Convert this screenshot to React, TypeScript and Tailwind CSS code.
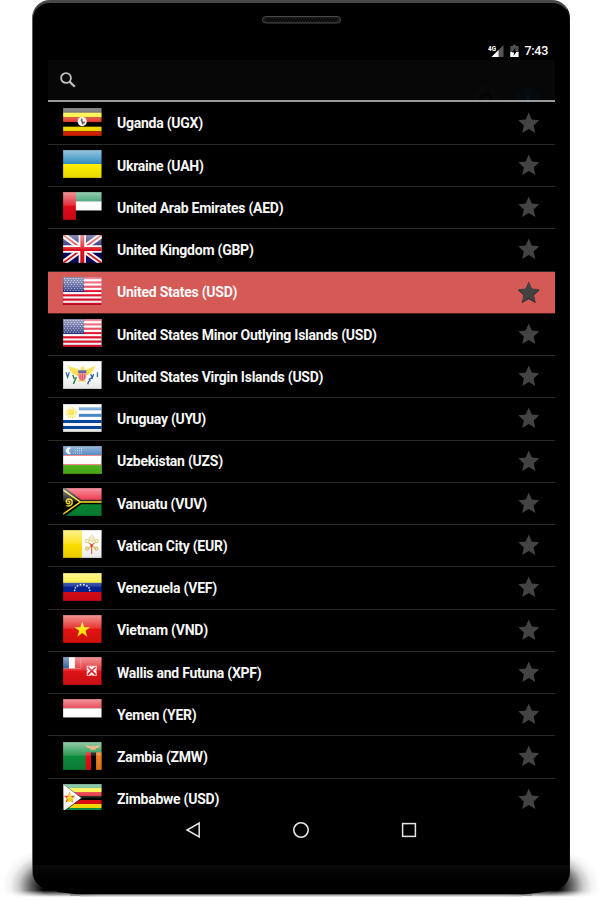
import type { ReactNode } from 'react'
import { clsx } from 'clsx'

interface Country {
  name: string
  flag: ReactNode
  selected?: boolean
}

const STAR = 'M12 1.6l3.1 7.1 7.6.8-5.7 5.2 1.7 7.7-6.7-4-6.7 4 1.7-7.7L1.3 9.5l7.6-.8z'

function Stripes({ colors }: { colors: string[] }) {
  const h = 28 / colors.length
  return (
    <>
      {colors.map((c, i) => (
        <rect key={i} x="0" y={i * h} width="39" height={h + 0.05} fill={c} />
      ))}
    </>
  )
}

function UsFlag() {
  const dots: ReactNode[] = []
  for (let r = 0; r < 7; r++) {
    for (let c = 0; c < 7; c++) {
      dots.push(<circle key={`${r}-${c}`} cx={1.6 + c * 2.9 + (r % 2) * 1.3} cy={1.5 + r * 1.95} r="0.55" />)
    }
  }
  return (
    <>
      <rect width="39" height="28" fill="#fff" />
      {[0, 2, 4, 6, 8, 10, 12].map((i) => (
        <rect key={i} y={i * 2.154} width="39" height="2.154" fill="#e8102e" />
      ))}
      <rect width="21.3" height="15" fill="#26307c" />
      <g fill="#d5d8ee">{dots}</g>
    </>
  )
}

function UkFlag() {
  return (
    <>
      <rect width="39" height="28" fill="#05055f" />
      <path d="M0 0l39 28M39 0L0 28" stroke="#fff" strokeWidth="5.6" />
      <path d="M0 0l19.5 14M39 28L19.5 14M39 0L19.5 14M0 28l19.5-14" stroke="#e0101c" strokeWidth="1.7" />
      <path d="M19.5 0v28M0 14h39" stroke="#fff" strokeWidth="7.4" />
      <path d="M19.5 0v28M0 14h39" stroke="#e0101c" strokeWidth="4" />
    </>
  )
}

function UgandaFlag() {
  return (
    <>
      <Stripes colors={['#111', '#ffee00', '#e02010', '#000', '#f8e000', '#e02400']} />
      <circle cx="19.4" cy="13.6" r="4.6" fill="#fff" />
      <path d="M18.4 10l1.8 1.3-.5 1.6 1.3 1.4-.3 2.2-1.5-.2-.5-2.4-1-1.4z" fill="#555" />
      <path d="M20.7 13.4l1.6.3-.4 1.7-1.4-.4z" fill="#e02010" />
    </>
  )
}

function UaeFlag() {
  return (
    <>
      <Stripes colors={['#108c50', '#fff', '#000']} />
      <rect width="13" height="28" fill="#e00b18" />
    </>
  )
}

function VirginFlag() {
  return (
    <>
      <rect width="39" height="28" fill="#fff" />
      <path
        d="M18 9.5l-3-1.5-11-3.5 3 4-1 .2 3 2.3-1 .5 4 2 4 1.5 1 3.5-2 2.5 4-1 4.5 1-2.5-2.5 1-3.5 3.5-1.5 4-2-1-.5 3-2.3-1-.2 3-4-9 3.5-2.5 1.5c0-2.5-.7-4.2-2-4.2-1.5 0-2.3 1.5-2 4.2z"
        fill="#f5d817"
      />
      <path d="M15.4 9.2h8.2v6.5c0 2-1.8 3.3-4.1 4.3-2.3-1-4.1-2.3-4.1-4.3z" fill="#f2939a" />
      <path d="M17.3 12v6.3M19.5 12v7.6M21.7 12v6.3" stroke="#e04550" strokeWidth=".8" />
      <path d="M15.4 9.2h8.2v2.9h-8.2z" fill="#39438c" />
      <path d="M3 11l1.7 5L6.3 11M34.8 11v5" stroke="#276aa4" strokeWidth="1.4" fill="none" />
      <path d="M10 14l1.4 4M13.5 16l-3 7" stroke="#319246" strokeWidth="1.6" />
      <path d="M28 13l1.6 3.6-3 1.6 1 2.2M26 20l-1 3.2M31 13l-2 5" stroke="#2c62a6" strokeWidth="1.4" fill="none" />
    </>
  )
}

function UruguayFlag() {
  return (
    <>
      <rect width="39" height="28" fill="#fff" />
      <rect x="16" y="3.3" width="23" height="3" fill="#2478c8" />
      <rect x="16" y="9.8" width="23" height="3" fill="#1766b5" />
      <rect y="16" width="39" height="3" fill="#0647a0" />
      <rect y="22" width="39" height="3" fill="#0647a0" />
      <circle cx="8.3" cy="8.3" r="4.8" fill="none" stroke="#f4dd20" strokeWidth="1.9" strokeDasharray="1.1 .8" />
      <circle cx="8.3" cy="8.3" r="3.3" fill="#f4dd20" />
    </>
  )
}

function UzbekFlag() {
  return (
    <>
      <rect width="39" height="28" fill="#fff" />
      <rect width="39" height="9" fill="#1a60ad" />
      <rect y="9" width="39" height=".8" fill="#e83b40" />
      <rect y="18.4" width="39" height=".8" fill="#e83b40" />
      <rect y="19.1" width="39" height="9" fill="#50b51b" />
      <path d="M7.8 2.1A3.1 3.1 0 1 0 7.8 7.4 2.8 2.8 0 0 1 7.8 2.1z" fill="#fff" stroke="#fff" strokeWidth=".4" />
      <path d="M14 2.4h6.5M12 4.7h8.5M10 7h10.5" stroke="#dce9f8" strokeWidth=".9" strokeDasharray=".9 1.2" />
    </>
  )
}

function VanuatuFlag() {
  return (
    <>
      <rect width="39" height="14" fill="#eb0d28" />
      <rect y="14" width="39" height="14" fill="#078532" />
      <path d="M0 0l19 14L0 28z" fill="#000" />
      <path d="M0 1l17.5 13L0 27M17.5 14H39" stroke="#000" strokeWidth="4.6" fill="none" />
      <path d="M0 1.8L17.5 14 0 26.2M17.5 14H39" stroke="#ffe11a" strokeWidth="1.5" fill="none" />
      <path d="M3.2 17.6c4 1.5 6.8-1.4 6-4.4-.8-3-5.7-3-5.9.4-.1 2.5 3.4 3 3.6.8.1-1.1-1.2-1.4-1.7-.6" stroke="#f3d51c" strokeWidth="1.5" fill="none" />
    </>
  )
}

function VaticanFlag() {
  return (
    <>
      <rect width="19.2" height="28" fill="#ffdf00" />
      <rect x="19.2" width="19.8" height="28" fill="#fff" />
      <g stroke="#dfc760" strokeWidth="1.2" fill="none">
        <path d="M25 12l8 7M33 12l-8 7" />
        <circle cx="24.2" cy="11" r="1.6" />
        <circle cx="33.8" cy="11" r="1.6" />
        <circle cx="24.3" cy="18.7" r="1.5" />
        <circle cx="33.7" cy="18.7" r="1.5" />
      </g>
      <path d="M26.8 11c-1-3.5 1-5.5 2.2-6 1.2.5 3.2 2.5 2.2 6z" fill="#eee4bd" stroke="#d9bc55" strokeWidth=".8" />
      <path d="M27 13l2 3 2-3M29 14v7M27.5 16h3" stroke="#e2434c" strokeWidth="1" fill="none" />
      <path d="M29 21v3" stroke="#d25b5b" strokeWidth="1" />
    </>
  )
}

function VenezuelaFlag() {
  const angles = [180, 154, 129, 103, 77, 51, 26, 0]
  return (
    <>
      <rect width="39" height="10" fill="#ffec12" />
      <rect y="9.8" width="39" height="9.2" fill="#04218f" />
      <rect y="19" width="39" height="9" fill="#d90c18" />
      {angles.map((a) => (
        <circle
          key={a}
          cx={19.4 + 7.6 * Math.cos((a * Math.PI) / 180)}
          cy={17.3 - 5.8 * Math.sin((a * Math.PI) / 180)}
          r=".85"
          fill="#e9eefa"
        />
      ))}
    </>
  )
}

function VietnamFlag() {
  return (
    <>
      <rect width="39" height="28" fill="#e3120f" />
      <path d="M19.5 6.5l2 5.7h6l-4.8 3.6 1.8 5.9-5-3.6-5 3.6 1.8-5.9-4.8-3.6h6z" fill="#ffec00" />
    </>
  )
}

function WallisFlag() {
  return (
    <>
      <rect width="39" height="28" fill="#df1217" />
      <path d="M0 11.5h18V0" stroke="#eb8d8d" strokeWidth=".5" fill="none" />
      <rect width="6" height="11.3" fill="#06358a" />
      <rect x="6" width="6" height="11.3" fill="#fff" />
      <rect x="24" y="8.8" width="10" height="10" fill="#fff" />
      <path d="M25 9.8l8 8M33 9.8l-8 8" stroke="#e4202a" strokeWidth="1.7" />
      <path d="M28 8.8h2l-1 1.2zM28 18.8h2l-1-1.2zM24 12.8v2l1.2-1zM34 12.8v2l-1.2-1z" fill="#df1217" />
    </>
  )
}

function ZambiaFlag() {
  return (
    <>
      <rect width="39" height="28" fill="#0c8a3a" />
      <rect x="23" y="10.4" width="5.3" height="17.6" fill="#ea0d18" />
      <rect x="28.3" y="10.4" width="5.2" height="17.6" fill="#000" />
      <rect x="33.5" y="10.4" width="5.5" height="17.6" fill="#f47c1c" />
      <path d="M22.6 2.8c2.6 1 4.5 1.3 6.5 1.6l1-.9 1 .9c2.4-.3 4-.6 6.5-1.6-1.2 3-3 3.6-5.3 3.9l.7 1.5-2.9-.6-2.8.6.8-1.5c-2.4-.3-4.6-1.3-5.5-3.9z" fill="#f28a46" />
    </>
  )
}

function ZimbabweFlag() {
  return (
    <>
      <Stripes colors={['#159355', '#ffea00', '#e00b18', '#000', '#df0d12', '#ffe400', '#079447']} />
      <path d="M0 0l19 14L0 28z" fill="#fff" stroke="#000" strokeWidth=".7" />
      <path d="M6.5 7.5l1.5 4.2h4.5L9 14.4l1.3 4.3-3.8-2.6-3.8 2.6L4 14.4.6 11.7H5z" fill="#e22b1c" />
      <path d="M5.2 9l2.8.8.4 2.6 2.8 2.8-2.5.5 1.2 2H4l.8-2.2-1.5-1.4 2.1-1.7z" fill="#f4d51d" />
    </>
  )
}

const countries: Country[] = [
  { name: 'Uganda (UGX)', flag: <UgandaFlag /> },
  { name: 'Ukraine (UAH)', flag: <Stripes colors={['#137db8', '#ffee00']} /> },
  { name: 'United Arab Emirates (AED)', flag: <UaeFlag /> },
  { name: 'United Kingdom (GBP)', flag: <UkFlag /> },
  { name: 'United States (USD)', flag: <UsFlag />, selected: true },
  { name: 'United States Minor Outlying Islands (USD)', flag: <UsFlag /> },
  { name: 'United States Virgin Islands (USD)', flag: <VirginFlag /> },
  { name: 'Uruguay (UYU)', flag: <UruguayFlag /> },
  { name: 'Uzbekistan (UZS)', flag: <UzbekFlag /> },
  { name: 'Vanuatu (VUV)', flag: <VanuatuFlag /> },
  { name: 'Vatican City (EUR)', flag: <VaticanFlag /> },
  { name: 'Venezuela (VEF)', flag: <VenezuelaFlag /> },
  { name: 'Vietnam (VND)', flag: <VietnamFlag /> },
  { name: 'Wallis and Futuna (XPF)', flag: <WallisFlag /> },
  { name: 'Yemen (YER)', flag: <Stripes colors={['#e0101f', '#fff', '#000']} /> },
  { name: 'Zambia (ZMW)', flag: <ZambiaFlag /> },
  { name: 'Zimbabwe (USD)', flag: <ZimbabweFlag /> },
]

function Flag({ children }: { children: ReactNode }) {
  return (
    <svg viewBox="0 0 39 28" preserveAspectRatio="none" className="h-[28px] w-[38.6px] shrink-0">
      {children}
      <rect width="39" height="28" fill="url(#gloss)" />
      <rect x=".25" y=".25" width="38.5" height="27.5" fill="none" stroke="#000" strokeOpacity=".25" strokeWidth=".5" />
    </svg>
  )
}

function CountryRow({ country }: { country: Country }) {
  return (
    <div
      className={clsx(
        'flex h-[42.25px] shrink-0 items-center border-b pr-[15px] pl-[15.2px]',
        country.selected ? 'border-[#4a2220] bg-[#d55a56]' : 'border-[#2b2b2b]',
      )}
    >
      <div className="-mt-[3px] flex">
        <Flag>{country.flag}</Flag>
      </div>
      <span className="ml-[15.2px] flex-1 text-[14px] leading-5 font-bold tracking-[-0.25px] whitespace-nowrap text-[#f8f8f8]">
        {country.name}
      </span>
      <svg viewBox="0 0 24 24" className="-mt-[2px] h-[23.5px] w-[23.5px]">
        {country.selected && <path d={STAR} transform="translate(0 .8)" fill="#16262b" stroke="#16262b" strokeWidth=".5" />}
        <path d={STAR} fill="#434343" />
      </svg>
    </div>
  )
}

function StatusBar() {
  return (
    <div className="flex h-[18px] items-center justify-end pr-[7px]">
      <svg width="32" height="14" viewBox="0 0 32 14" className="mr-[4px]">
        <path d="M15.5 1v12h-12z" fill="#555" />
        <path d="M10.5 6v7h-7z" fill="#fff" />
        <text x="0" y="6.6" fontSize="7.5" fontWeight="700" fill="#fff" stroke="#000" strokeWidth="1" paintOrder="stroke" textLength="8" lengthAdjust="spacingAndGlyphs">4G</text>
        <path d="M22.3 2H25V.8h2.8V2h2.7v11h-8.2z" fill="#505050" />
        <path d="M22.3 8h8.2v5h-8.2z" fill="#fff" />
        <path d="M27.7 3.5L24 8.5h2.2l-.8 3.5 3.7-5h-2.2z" fill="#000" />
      </svg>
      <span className="text-[12.5px] leading-[18px] font-medium tracking-[-0.25px] text-white">7:43</span>
    </div>
  )
}

function SearchBar() {
  return (
    <div className="flex h-[42px] shrink-0 items-center justify-between overflow-hidden border-b-2 border-[#999] bg-[#070707] pl-[11px]">
      <svg width="18" height="18" viewBox="0 0 18 18" fill="none" stroke="#bdbdbd">
        <circle cx="7" cy="7" r="4.9" strokeWidth="1.9" />
        <path d="M10.6 10.6l5.2 5.2" strokeWidth="2.3" />
      </svg>
      <div className="mt-[37px] mr-[13px] flex gap-[14px]">
        <svg width="28" height="28" viewBox="0 0 28 28">
          <circle cx="14" cy="14" r="13" fill="#090909" />
          <circle cx="14" cy="14" r="5" fill="none" stroke="#020202" strokeWidth="3" strokeDasharray="2 1" />
        </svg>
        <svg width="28" height="28" viewBox="0 0 28 28">
          <circle cx="14" cy="14" r="13" fill="#050a0e" />
          <path d="M14 7v2M14 11v8" stroke="#07131b" strokeWidth="2" />
        </svg>
      </div>
    </div>
  )
}

function NavBar() {
  return (
    <div className="flex h-[40px] items-center justify-center gap-[90px] pr-[.8px]">
      <svg width="18" height="18" viewBox="0 0 18 18" fill="none" stroke="#e6e6e6" strokeWidth="1.5">
        <path d="M15.2 2v14L3 9z" />
      </svg>
      <svg width="18" height="18" viewBox="0 0 18 18" fill="none" stroke="#e6e6e6" strokeWidth="1.6">
        <circle cx="9" cy="9" r="7.2" />
      </svg>
      <svg width="18" height="18" viewBox="0 0 18 18" fill="none" stroke="#e6e6e6" strokeWidth="1.5">
        <rect x="2.6" y="2.6" width="12.8" height="12.8" />
      </svg>
    </div>
  )
}

function Speaker() {
  return (
    <svg width="79" height="8" viewBox="0 0 79 8" className="mx-auto">
      <rect x=".5" y=".5" width="78" height="6.5" rx="3.25" fill="#1b1b1b" stroke="#484848" />
      <path d="M3.5 3h72" stroke="#000" strokeWidth="1.4" strokeDasharray="1.4 1.4" />
      <path d="M4.9 4.8h70" stroke="#000" strokeWidth="1.4" strokeDasharray="1.4 1.4" />
    </svg>
  )
}

function GroundShadow() {
  return (
    <svg className="absolute top-[840px] left-0" width="602" height="60" viewBox="0 0 602 60">
      <defs>
        <radialGradient id="corner">
          <stop offset=".28" stopColor="#000" />
          <stop offset=".5" stopColor="#000" stopOpacity=".6" />
          <stop offset=".7" stopColor="#000" stopOpacity=".2" />
          <stop offset=".85" stopColor="#000" stopOpacity=".05" />
          <stop offset="1" stopColor="#000" stopOpacity="0" />
        </radialGradient>
        <linearGradient id="floor" x1="0" y1="0" x2="0" y2="1">
          <stop offset="0" stopColor="#fff" />
          <stop offset=".84" stopColor="#fff" />
          <stop offset=".95" stopColor="#000" />
        </linearGradient>
        <mask id="ground">
          <rect width="602" height="60" fill="url(#floor)" />
        </mask>
      </defs>
      <g mask="url(#ground)">
        <ellipse cx="58" cy="46" rx="56" ry="40" fill="url(#corner)" />
        <ellipse cx="544" cy="46" rx="56" ry="40" fill="url(#corner)" />
      </g>
      <path d="M46 46h510l-12 6-20 2.5H78L58 52z" />
      <path d="M70 55h462" stroke="#666" strokeWidth="1" />
      <path d="M80 56h442" stroke="#bbb" strokeWidth="1" />
    </svg>
  )
}

export default function App() {
  return (
    <div className="relative h-[900px] w-[602px] overflow-hidden bg-white font-[Roboto,sans-serif]">
      <svg width="0" height="0" className="absolute">
        <defs>
          <linearGradient id="gloss" x1="0" y1="0" x2="0" y2="1">
            <stop offset="0" stopColor="#fff" stopOpacity=".56" />
            <stop offset=".48" stopColor="#fff" stopOpacity=".14" />
            <stop offset=".5" stopColor="#000" stopOpacity="0" />
            <stop offset="1" stopColor="#000" stopOpacity=".1" />
          </linearGradient>
        </defs>
      </svg>
      <GroundShadow />
      <div className="relative mx-auto flex h-[890px] w-[538px] flex-col overflow-hidden rounded-t-[18px] rounded-b-[18px] border-x border-t-[3px] border-r-[#111] border-l-[#5c5c5c] border-t-[#484848] bg-black">
        <div className="flex h-[39px] shrink-0 pt-[12.5px]">
          <Speaker />
        </div>
        <div className="mx-[15px] flex w-[507px] flex-col">
          <StatusBar />
          <SearchBar />
          <div className="flex h-[708px] flex-col overflow-hidden pt-[.7px]">
            {countries.map((c) => (
              <CountryRow key={c.name} country={c} />
            ))}
          </div>
          <NavBar />
        </div>
        <div className="mt-auto h-[25px] bg-linear-to-b from-[#0b0b0b] to-black" />
      </div>
    </div>
  )
}
